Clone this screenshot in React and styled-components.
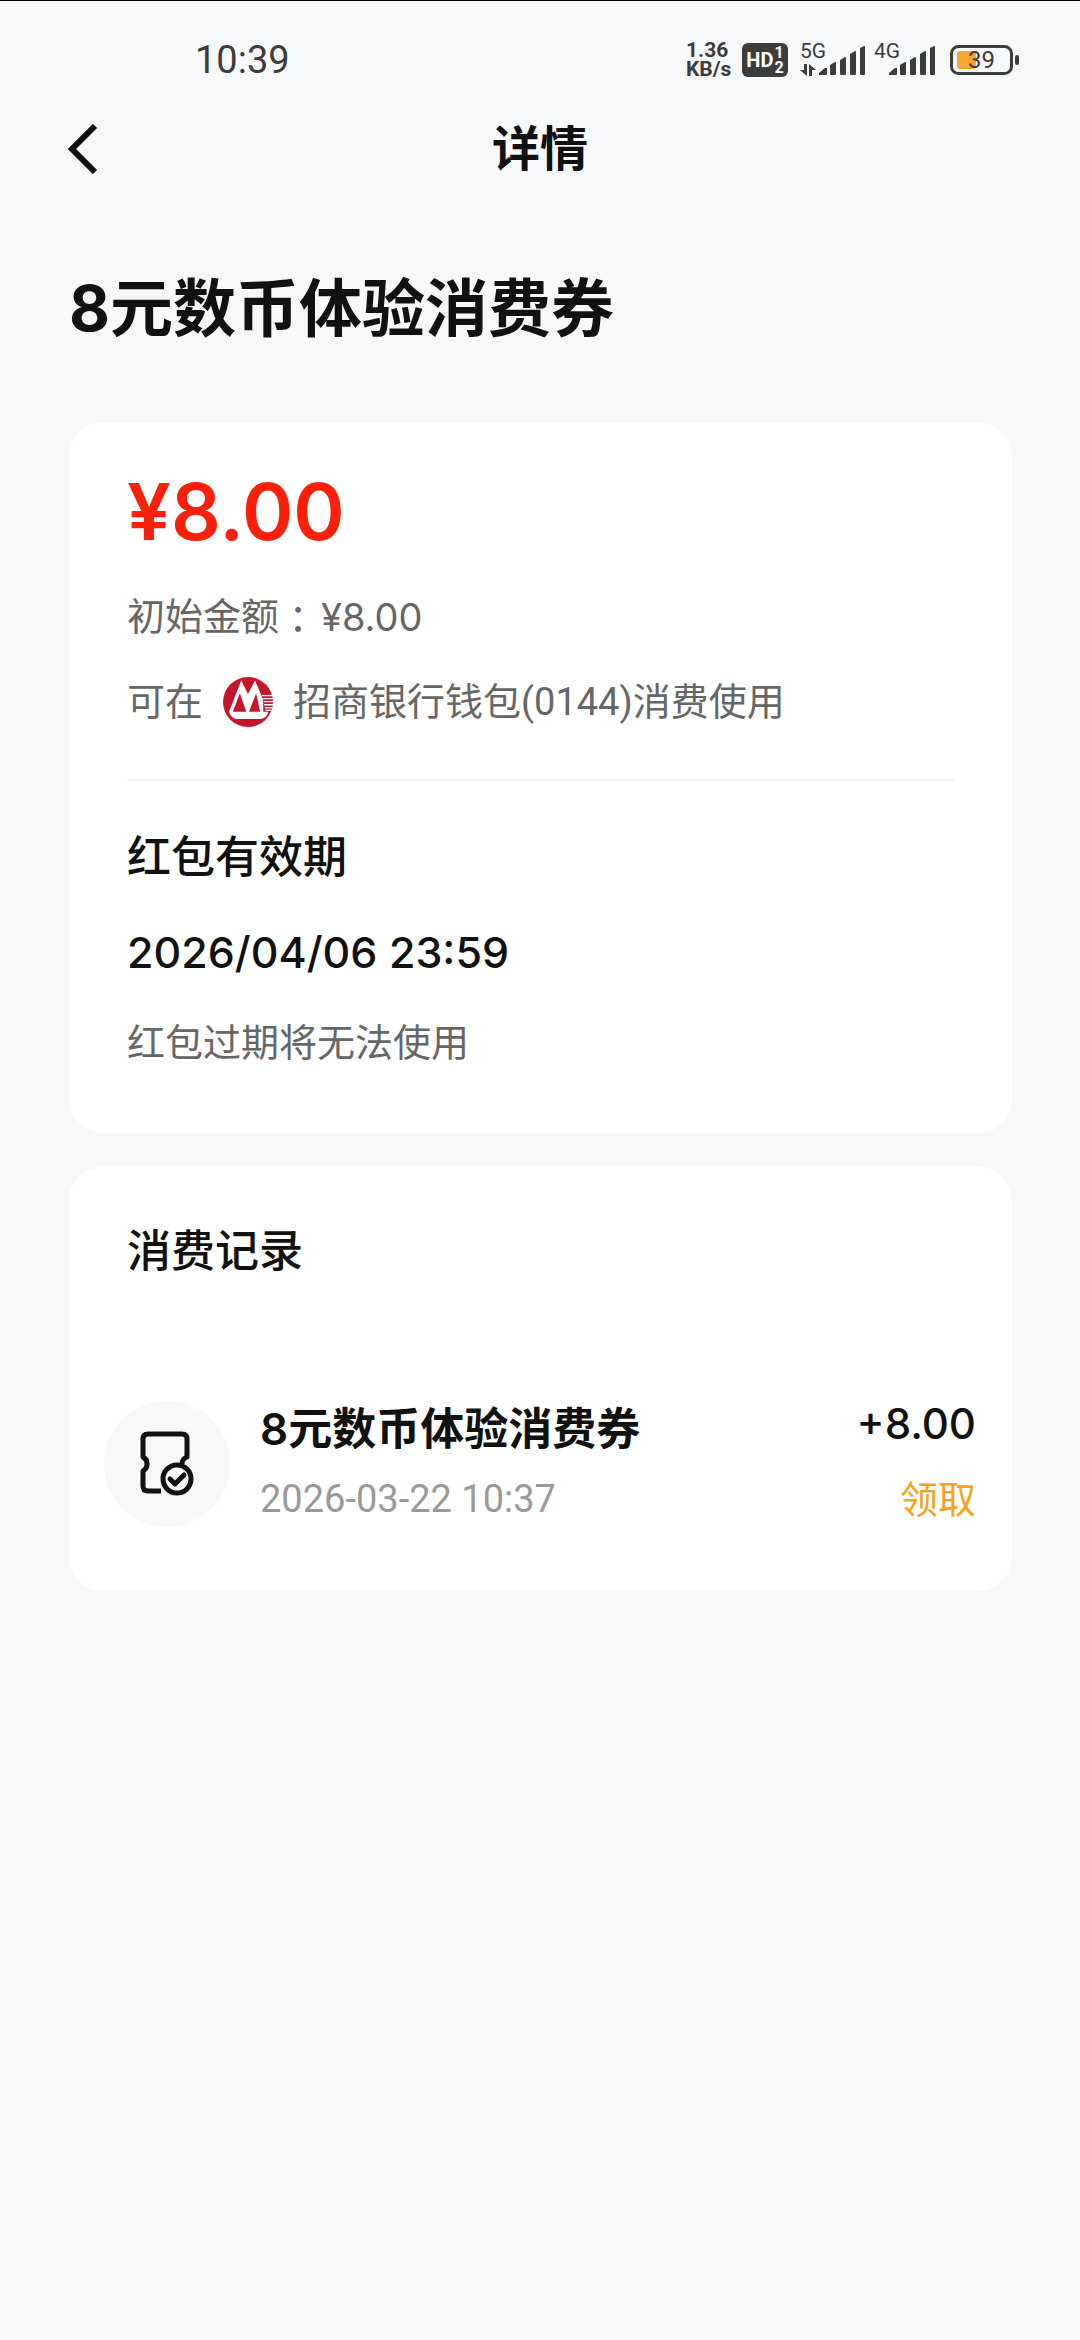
import React from 'react';
import styled, { createGlobalStyle } from 'styled-components';

const GlobalStyle = createGlobalStyle`
  * {
    box-sizing: border-box;
  }

  body {
    margin: 0;
    background: #f7f8fa;
    color: #111;
    font-family: Roboto, 'Noto Sans CJK SC', sans-serif;
  }

  h1, h2, h3, p, ul {
    margin: 0;
    padding: 0;
    font-weight: 500;
  }

  h1, h2, h3 {
    font-family: Inter, 'Noto Sans CJK SC', sans-serif;
  }
`;

const records = [
  { id: 1, name: '8元数币体验消费券', time: '2026-03-22 10:37', amount: '+8.00', status: '领取' },
];

function SignalBars() {
  return (
    <svg width="47" height="30" viewBox="0 0 47 30" fill="#3c3c3c">
      <path d="M0 29v-2l6-5h2v6q0 1-1 1z" />
      <path d="M11 19l5-3q1 0 1 1v11q0 1-1 1h-4q-1 0-1-1z" />
      <path d="M21 14l5-3q1 0 1 1v16q0 1-1 1h-4q-1 0-1-1z" />
      <path d="M31 8l5-3q1 0 1 1v22q0 1-1 1h-4q-1 0-1-1z" />
      <path d="M41 2l4-2q1 0 1 1v27q0 1-1 1h-3q-1 0-1-1z" />
    </svg>
  );
}

function DataArrows() {
  return (
    <svg width="16" height="12" viewBox="0 0 16 12" fill="#3c3c3c">
      <path d="M4 0h3v12L0 6h4zM9 12V0l7 6h-4v6z" />
    </svg>
  );
}

function BatteryIcon() {
  return (
    <svg width="70" height="30" viewBox="0 0 70 30">
      <rect x="1.5" y="1.5" width="60" height="27" rx="7" fill="none" stroke="#3c3c3c" strokeWidth="3" />
      <rect x="7" y="6" width="19" height="18" rx="3" fill="#f4a732" />
      <rect x="65" y="10" width="4" height="10" rx="2" fill="#3c3c3c" />
    </svg>
  );
}

function BankLogo() {
  return (
    <svg width="50" height="50" viewBox="0 0 148 148">
      <circle cx="74" cy="74" r="74" fill="#c4162c" />
      <path d="M54 10L74 50 95 10 119 68V103H134Q130 124 108 124H42Q24 124 18 103Z" fill="#fff" />
      <path d="M50 48L29 103H69ZM98 48L77 103H110Z" fill="#c4162c" />
      <path d="M116 55h30M119 64h29M121 73h27M122 82h26M124 91h22M126 99h18" stroke="#fff" strokeWidth="4" />
    </svg>
  );
}

function CouponIcon() {
  return (
    <svg width="56" height="66" viewBox="0 0 56 66" fill="none" stroke="#111" strokeWidth="5" strokeLinejoin="round">
      <path d="M22 60H9Q4 60 4 55V40A8 8 0 0 0 4 26V8Q4 3 9 3H43Q48 3 48 8V26Q43 28 43 33" />
      <circle cx="38" cy="48" r="14" />
      <path d="M31 48l5 5 9-9" strokeLinecap="round" />
    </svg>
  );
}

function App() {
  return (
    <Page>
      <GlobalStyle />
      <StatusBar>
        <Clock>10:39</Clock>
        <StatusIcons>
          <NetSpeed>
            <span>1.36</span>
            <span>KB/s</span>
          </NetSpeed>
          <HdBadge>
            HD
            <HdLines>
              <span>1</span>
              <span>2</span>
            </HdLines>
          </HdBadge>
          <Signal>
            <NetType>5G</NetType>
            <DataArrows />
            <SignalBars />
          </Signal>
          <Signal>
            <NetType>4G</NetType>
            <SignalBars />
          </Signal>
          <Battery>
            <BatteryIcon />
            <BatteryLevel>39</BatteryLevel>
          </Battery>
        </StatusIcons>
      </StatusBar>

      <NavBar>
        <BackButton type="button" aria-label="返回">
          <svg width="30" height="50" viewBox="0 0 30 50" fill="none" stroke="#111" strokeWidth="6">
            <path d="M27 2L4 25l23 23" />
          </svg>
        </BackButton>
        <NavTitle>详情</NavTitle>
      </NavBar>

      <Main>
        <CouponTitle>8元数币体验消费券</CouponTitle>

        <Card>
          <CouponInfo>
            <Amount>¥8.00</Amount>
            <InfoLine>
              初始金额<Colon>：</Colon>
              <Money>¥8.00</Money>
            </InfoLine>
            <InfoLine>
              可在
              <LogoWrapper>
                <BankLogo />
              </LogoWrapper>
              招商银行钱包(0144)消费使用
            </InfoLine>
          </CouponInfo>
          <Validity>
            <SectionTitle>红包有效期</SectionTitle>
            <ExpireTime>2026/04/06 23:59</ExpireTime>
            <InfoLine>红包过期将无法使用</InfoLine>
          </Validity>
        </Card>

        <Card>
          <RecordHeader>
            <SectionTitle>消费记录</SectionTitle>
          </RecordHeader>
          <RecordList>
            {records.map((item) => (
              <RecordItem key={item.id}>
                <RecordIcon>
                  <CouponIcon />
                </RecordIcon>
                <RecordText>
                  <RecordName>{item.name}</RecordName>
                  <RecordTime>{item.time}</RecordTime>
                </RecordText>
                <RecordText $right>
                  <RecordAmount>{item.amount}</RecordAmount>
                  <RecordStatus>{item.status}</RecordStatus>
                </RecordText>
              </RecordItem>
            ))}
          </RecordList>
        </Card>
      </Main>
    </Page>
  );
}

export default App;

const Page = styled.div`
  min-height: 100vh;
  border-top: 1px solid #000;
  background: #f7f8fa;
`;

const StatusBar = styled.div`
  display: flex;
  align-items: center;
  justify-content: space-between;
  height: 92px;
  padding: 25px 60px 0 195px;
  color: #3c3c3c;
`;

const Clock = styled.span`
  font-size: 38px;
  line-height: 44px;
`;

const StatusIcons = styled.div`
  display: flex;
  align-items: center;
  gap: 8px;
`;

const NetSpeed = styled.div`
  display: flex;
  flex-direction: column;
  width: 48px;
  font-family: Roboto, sans-serif;
  font-size: 21px;
  line-height: 19px;
  font-weight: 700;
`;

const HdBadge = styled.div`
  display: flex;
  align-items: center;
  justify-content: center;
  gap: 1px;
  width: 46px;
  height: 34px;
  margin-right: 4px;
  border-radius: 6px;
  background: #3c3c3c;
  color: #fff;
  font-family: Roboto, sans-serif;
  font-size: 20px;
  font-weight: 700;
`;

const HdLines = styled.span`
  display: flex;
  flex-direction: column;
  font-size: 16px;
  line-height: 15px;
`;

const Signal = styled.div`
  position: relative;
  display: flex;
  align-items: flex-end;
  justify-content: flex-end;
  gap: 3px;
  height: 34px;
  min-width: 62px;
  padding-bottom: 1px;
`;

const NetType = styled.span`
  position: absolute;
  top: 0;
  left: 0;
  font-size: 21px;
  line-height: 16px;
`;

const Battery = styled.div`
  position: relative;
  display: flex;
  margin-left: 6px;
`;

const BatteryLevel = styled.span`
  position: absolute;
  inset: 0 7px 0 0;
  padding-left: 18px;
  font-size: 24px;
  line-height: 30px;
`;

const NavBar = styled.header`
  display: grid;
  grid-template-columns: 1fr auto 1fr;
  align-items: center;
  height: 112px;
  padding: 0 68px;
`;

const BackButton = styled.button`
  display: flex;
  justify-self: start;
  padding: 0;
  border: none;
  background: none;
  cursor: pointer;
`;

const NavTitle = styled.h1`
  font-size: 48px;
  line-height: 64px;
  font-weight: 600;
`;

const Main = styled.main`
  display: flex;
  flex-direction: column;
  gap: 34px;
  padding: 0 68px 0 69px;
`;

const CouponTitle = styled.h2`
  padding: 55px 0 32px;
  font-size: 63px;
  line-height: 96px;
  font-weight: 700;
`;

const Card = styled.section`
  border-radius: 34px;
  background: #fff;
`;

const CouponInfo = styled.div`
  display: flex;
  flex-direction: column;
  gap: 29px;
  margin: 0 58px;
  padding: 42px 0 49px;
  border-bottom: 2px solid #f5f5f5;
`;

const Validity = styled.div`
  display: flex;
  flex-direction: column;
  gap: 35px;
  padding: 44px 58px 62px;
`;

const Amount = styled.p`
  color: #fa200a;
  font-family: Inter, sans-serif;
  font-size: 78px;
  line-height: 96px;
  font-weight: 600;
`;

const InfoLine = styled.p`
  display: flex;
  align-items: center;
  color: #666;
  font-size: 38px;
  line-height: 56px;
  font-weight: 400;
`;

const Colon = styled.span`
  font-family: 'Noto Sans CJK TC', sans-serif;
`;

const Money = styled.span`
  margin-left: 4px;
  font-family: Inter, sans-serif;
`;

const LogoWrapper = styled.span`
  display: flex;
  margin: 0 20px;
`;

const SectionTitle = styled.h3`
  font-size: 44px;
  line-height: 64px;
`;

const ExpireTime = styled.p`
  font-family: Inter, sans-serif;
  font-size: 43px;
  line-height: 56px;
`;

const RecordHeader = styled.div`
  padding: 52px 58px 0;
`;

const RecordList = styled.ul`
  padding: 117px 36px 63px 35px;
  list-style: none;
`;

const RecordItem = styled.li`
  display: flex;
  align-items: center;
`;

const RecordIcon = styled.span`
  display: flex;
  align-items: center;
  justify-content: center;
  width: 126px;
  height: 126px;
  margin-right: 30px;
  border-radius: 50%;
  background: #f7f8fa;
`;

const RecordText = styled.div`
  display: flex;
  flex-direction: column;
  gap: ${(props) => (props.$right ? '24px' : '14px')};
  ${(props) => props.$right && 'margin-left: auto; align-items: flex-end;'}
`;

const RecordName = styled.p`
  font-family: Inter, 'Noto Sans CJK SC', sans-serif;
  font-size: 44px;
  line-height: 56px;
  font-weight: 600;
`;

const RecordTime = styled.p`
  color: #999;
  font-size: 38px;
  line-height: 56px;
  font-weight: 400;
`;

const RecordAmount = styled.p`
  font-family: Inter, sans-serif;
  font-size: 42px;
  line-height: 48px;
`;

const RecordStatus = styled.p`
  color: #f5a31d;
  font-size: 38px;
  line-height: 56px;
  font-weight: 400;
`;
